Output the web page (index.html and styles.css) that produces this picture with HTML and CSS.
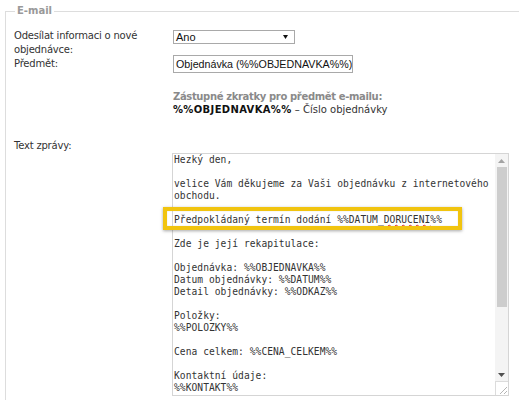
FILE: index.html
```html
<!DOCTYPE html>
<html lang="cs">
<head>
<meta charset="utf-8">
<title>Nastavení e-mailu</title>
<link rel="stylesheet" href="styles.css">
</head>
<body>
<fieldset class="mail">
  <legend class="mail-legend">E-mail</legend>
  <div class="rows">
    <div class="row row-top">
      <label class="lbl">Odesílat informaci o nové objednávce:</label>
      <div class="select"><span>Ano</span><svg class="select-arrow" width="5" height="4" viewBox="0 0 5 4"><path d="M0 0h5L2.5 4z" fill="#111"/></svg></div>
    </div>
    <div class="row row-mid">
      <label class="lbl">Předmět:</label>
      <div class="input">Objednávka (%%OBJEDNAVKA%%)</div>
    </div>
    <div class="row row-hint">
      <span></span>
      <div class="hint">
        <div class="hint-title">Zástupné zkratky pro předmět e-mailu:</div>
        <div class="hint-line"><b class="code">%%OBJEDNAVKA%%</b> – Číslo objednávky</div>
      </div>
    </div>
    <div class="row row-text">
      <label class="lbl">Text zprávy:</label>
      <span></span>
    </div>
    <div class="row">
      <span></span>
      <div class="editor-wrap">
        <div class="editor">
          <div class="editor-text">Hezký den,

velice Vám děkujeme za Vaši objednávku z internetového
obchodu.

Předpokládaný termín dodání %%DATUM_<span class="spell">DORUCENI</span>%%

Zde je její rekapitulace:

Objednávka: %%OBJEDNAVKA%%
Datum objednávky: %%DATUM%%
Detail objednávky: %%ODKAZ%%

Položky:
%%POLOZKY%%

Cena celkem: %%CENA_CELKEM%%

Kontaktní údaje:
%%KONTAKT%%

Děkujeme a přejeme hezký den.</div>
          <div class="sbar">
            <div class="sbar-btn"><svg width="7" height="4" viewBox="0 0 7 4"><path d="M3.5 0L7 4H0z" fill="#a3a3a3"/></svg></div>
            <div class="sbar-track"><div class="sbar-thumb"></div></div>
            <div class="sbar-btn"><svg width="7" height="4" viewBox="0 0 7 4"><path d="M0 0h7L3.5 4z" fill="#505050"/></svg></div>
            <div class="sbar-corner"><svg width="12" height="12" viewBox="0 0 12 12"><path d="M11 4L4 11M11 8L8 11" stroke="#b5b5b5" stroke-width="1"/></svg></div>
          </div>
        </div>
        <div class="mark"></div>
      </div>
    </div>
  </div>
</fieldset>
</body>
</html>
```

FILE: styles.css
```css
html, body {
  margin: 0;
  padding: 0;
  background: #fff;
  overflow: hidden;
}

body {
  width: 519px;
  height: 400px;
  font-family: "DejaVu Sans", Verdana, sans-serif;
  font-size: 10px;
  letter-spacing: -0.2px;
  color: #333;
}

/* fieldset frame */
.mail {
  margin: 4px -20px 0 5px;
  padding: 0 0 20px 8px;
  border: 1px solid #ddd;
  min-width: 0;
}

.mail-legend {
  margin-left: 1px;
  padding: 0 2px;
  font-weight: bold;
  color: #999;
  line-height: 14px;
  letter-spacing: 0;
}

.rows {
  padding-top: 11px;
}

.row {
  display: grid;
  grid-template-columns: 159px 1fr;
  line-height: 14px;
}

.row-mid {
  align-items: center;
}

.lbl {
  display: block;
}

/* select box */
.select {
  box-sizing: border-box;
  width: 122px;
  height: 14px;
  margin-top: 1px;
  border: 1px solid #a9a9a9;
  display: flex;
  align-items: center;
  justify-content: space-between;
  padding: 0 6px 0 2px;
  font-family: "Liberation Sans", Arial, sans-serif;
  font-size: 11px;
  letter-spacing: 0;
  color: #111;
}

.select-arrow {
  display: block;
}

/* text input */
.input {
  box-sizing: border-box;
  width: 180px;
  height: 18px;
  margin: -2px 0 -2px;
  border: 1px solid #a9a9a9;
  padding: 0 2px;
  font-family: "Liberation Sans", Arial, sans-serif;
  font-size: 10.7px;
  letter-spacing: 0;
  line-height: 16px;
  color: #111;
  white-space: nowrap;
  overflow: hidden;
}

/* placeholder hint */
.row-hint {
  margin-top: 19px;
  line-height: 13px;
}

.hint-title {
  font-weight: bold;
  color: #8a8a8a;
  letter-spacing: -0.35px;
}

.hint-line {
  letter-spacing: 0;
}

.code {
  color: #111;
  letter-spacing: 0.35px;
}

.row-text {
  margin-top: 23px;
}

/* message editor */
.editor-wrap {
  position: relative;
  width: 337px;
  margin-left: -1px;
}

.editor {
  display: flex;
  height: 243px;
  box-sizing: border-box;
  border: 1px solid #d5d5d5;
}

.editor-text {
  flex: 1;
  overflow: hidden;
  padding: 0 0 0 1px;
  font-family: "DejaVu Sans Mono", monospace;
  font-size: 9.6px;
  letter-spacing: 0.05px;
  line-height: 12px;
  white-space: pre;
  color: #333;
}

.spell {
  text-decoration: underline wavy #e03030;
  text-decoration-thickness: 1px;
  text-underline-offset: 1px;
}

/* scrollbar */
.sbar {
  width: 13px;
  display: flex;
  flex-direction: column;
  background: #f4f4f4;
}

.sbar-btn {
  height: 13px;
  display: flex;
  align-items: center;
  justify-content: center;
}

.sbar-btn svg {
  display: block;
}

.sbar-track {
  flex: 1;
  padding: 0 1px 0 2px;
}

.sbar-thumb {
  height: 140px;
  background: #cdcdcd;
}

.sbar-corner {
  height: 14px;
  box-sizing: border-box;
  border-top: 1px solid #dcdcdc;
  border-left: 1px solid #dcdcdc;
  background: #fff;
  display: flex;
  align-items: flex-end;
  justify-content: flex-end;
}

.sbar-corner svg {
  display: block;
}

/* highlighted line */
.mark {
  position: absolute;
  left: -9px;
  top: 54px;
  width: 299px;
  height: 23px;
  box-sizing: border-box;
  border: 4px solid #f1c40f;
  box-shadow: 0 1px 3px rgba(0, 0, 0, 0.35), inset 0 0 1px rgba(0, 0, 0, 0.3);
}
```
